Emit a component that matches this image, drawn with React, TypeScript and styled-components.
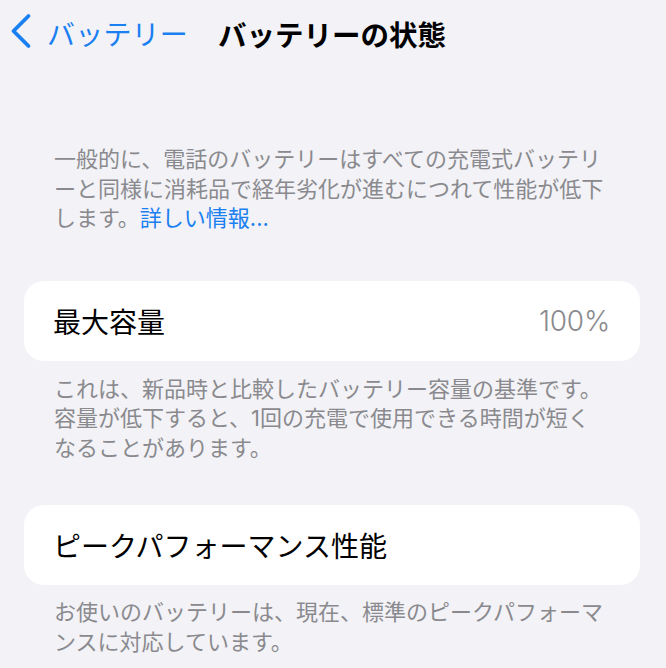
import styled, { createGlobalStyle } from "styled-components";

const GlobalStyle = createGlobalStyle`
  html, body {
    margin: 0;
    padding: 0;
    background: #f2f2f7;
  }
  body {
    font-family: Inter, "Noto Sans CJK JP", "Noto Sans", sans-serif;
    -webkit-font-smoothing: antialiased;
  }
`;

const Screen = styled.div`
  width: 666px;
  height: 668px;
  overflow: hidden;
  background: #f2f2f7;
  display: flex;
  flex-direction: column;
`;

const NavBar = styled.div`
  height: 66px;
  display: flex;
  align-items: center;
  padding-left: 10px;
`;

const BackButton = styled.div`
  display: flex;
  align-items: center;
  color: #1a7ff0;
  font-size: 28px;
  gap: 15px;
  letter-spacing: 0.2px;

  svg {
    margin-top: -5px;
  }
`;

const NavTitle = styled.div`
  margin-left: 30px;
  font-size: 28.5px;
  font-weight: 700;
  color: #000;
`;

const Note = styled.p<{ $top: number }>`
  margin: ${({ $top }) => $top}px 0 0;
  padding: 0 52px 0 54px;
  font-size: 22px;
  line-height: 29.5px;
  color: #8a8a8e;
`;

const Link = styled.span`
  color: #1a7ff0;
`;

const Card = styled.div<{ $top: number }>`
  margin: ${({ $top }) => $top}px 26px 0 24px;
  height: 80px;
  background: #fff;
  border-radius: 20px;
  display: flex;
  align-items: center;
  justify-content: space-between;
  padding: 0 30px 0 29px;
`;

const Label = styled.span`
  font-size: 28px;
  color: #000;
`;

const Value = styled.span`
  font-size: 28px;
  font-weight: 300;
  color: #8a8a8e;
  letter-spacing: -0.2px;
`;

function Chevron() {
  return (
    <svg width="22" height="36" viewBox="0 0 22 36">
      <path
        d="M18.5 3 L3.5 18 L18.5 33"
        fill="none"
        stroke="#1a7ff0"
        strokeWidth="3.8"
        strokeLinecap="round"
        strokeLinejoin="round"
      />
    </svg>
  );
}

export default function App() {
  return (
    <>
      <GlobalStyle />
      <Screen>
        <NavBar>
          <BackButton>
            <Chevron />
            バッテリー
          </BackButton>
          <NavTitle>バッテリーの状態</NavTitle>
        </NavBar>
        <Note $top={79}>
          一般的に、電話のバッテリーはすべての充電式バッテリ
          <br />
          ーと同様に消耗品で経年劣化が進むにつれて性能が低下
          <br />
          します。<Link>詳しい情報...</Link>
        </Note>
        <Card $top={47}>
          <Label>最大容量</Label>
          <Value>100%</Value>
        </Card>
        <Note $top={14}>
          これは、新品時と比較したバッテリー容量の基準です。
          <br />
          容量が低下すると、1回の充電で使用できる時間が短く
          <br />
          なることがあります。
        </Note>
        <Card $top={42}>
          <Label>ピークパフォーマンス性能</Label>
        </Card>
        <Note $top={13}>
          お使いのバッテリーは、現在、標準のピークパフォーマ
          <br />
          ンスに対応しています。
        </Note>
      </Screen>
    </>
  );
}
